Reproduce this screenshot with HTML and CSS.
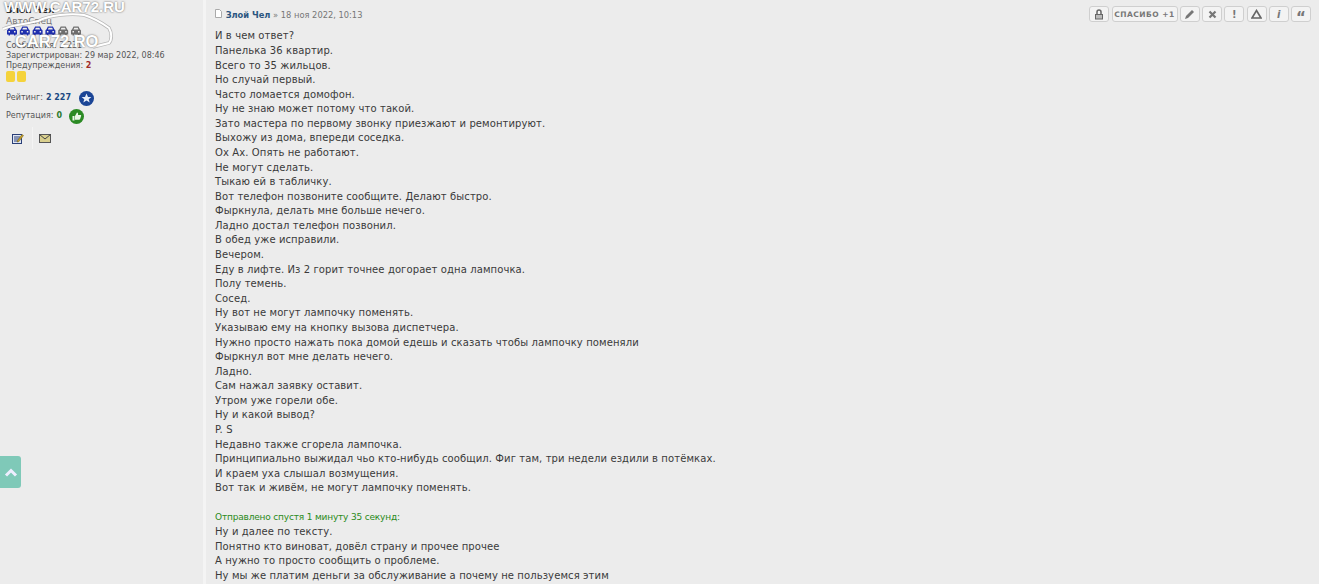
FILE: index.html
```html
<!DOCTYPE html>
<html lang="ru">
  <head>
    <meta charset="UTF-8" />
    <title>Злой Чел</title>
    <link rel="stylesheet" href="styles.css">
  </head>
  <body>
    <div class="post">
      <aside class="profile">
        <div class="watermark">
          <span class="wm-top">WWW.CAR72.RU</span>
          <svg class="wm-car" width="120" height="52" viewBox="0 0 120 52">
            <path d="M3 29 C14 24 28 24 38 21 C50 15 70 13 84 15 C94 18 102 23 109 28 C112 33 112 40 109 43 L93 47" fill="none" stroke="#8a8a8a" stroke-width="3.5" opacity="0.55"/>
            <path d="M3 29 C14 24 28 24 38 21 C50 15 70 13 84 15 C94 18 102 23 109 28 C112 33 112 40 109 43 L93 47" fill="none" stroke="#fff" stroke-width="2"/>
          </svg>
          <span class="wm-bottom">CAR72.RO</span>
        </div>
        <div class="username">Злой Чел</div>
        <div class="rank">АвтоСпец</div>
        <div class="cars">
          <svg width="78" height="10" viewBox="0 0 78 10">
            <defs>
              <path id="car" d="M2 3.500 3.500 .5h5L10 3.500c.7.2 1 .6 1 1.200V8.500H9.500V9.500H8V8.500H4V9.500H2.500V8.500H1V4.700c0-.6.3-1 1-1.200zM3.500 3.500h5L7.800 1.800H4.200zM2.500 5v1.500h1.500V5zM8 5v1.500h1.500V5z" fill-rule="evenodd"/>
            </defs>
            <g fill="#1f2fae">
              <use href="#car" x="0"/>
              <use href="#car" x="12.800"/>
              <use href="#car" x="25.600"/>
              <use href="#car" x="38.400"/>
            </g>
            <g fill="#6e6e6e">
              <use href="#car" x="51.200"/>
              <use href="#car" x="64"/>
            </g>
          </svg>
        </div>
        <div class="stat">Сообщения: 2 231</div>
        <div class="stat">Зарегистрирован: 29 мар 2022, 08:46</div>
        <div class="stat">Предупреждения: <b class="warn">2</b></div>
        <div class="cards"><i class="card"></i><i class="card"></i></div>
        <div class="score">
          Рейтинг: <b class="blue">2 227</b>
          <svg class="badge" width="15" height="15" viewBox="0 0 15 15">
            <circle cx="7.500" cy="7.500" r="7.500" fill="#1b4596"/>
            <path d="M7.500 2.500 9 6h3.400l-2.700 2.200 1 3.400-3.200-2-3.200 2 1-3.400L2.600 6H6z" fill="#e8eef8"/>
          </svg>
        </div>
        <div class="score rep">
          Репутация: <b class="green">0</b>
          <svg class="badge" width="15" height="15" viewBox="0 0 15 15">
            <circle cx="7.500" cy="7.500" r="7.500" fill="#2b8a24"/>
            <path d="M3.500 7h2v4.500h-2zM6 7l2-3.500c1 0 1.300.8 1 2.500h2.500c.6 0 .8.6.6 1.100l-1 3c-.2.5-.5.7-1 .7H6z" fill="#e9f6e6"/>
          </svg>
        </div>
        <div class="contact">
          <svg width="12" height="11" viewBox="0 0 12 11">
            <rect x=".5" y="1.500" width="9" height="9" fill="#dfe6f2" stroke="#2a3f78"/>
            <path d="M2 4h6M2 6h6M2 8h4" stroke="#2a3f78"/>
            <path d="M5.500 7.500l4.500-6 1.500 1-4.500 6-2 .5z" fill="#c9a227" stroke="#6b5a20" stroke-width=".5"/>
          </svg>
          <i class="sep"></i>
          <svg width="12" height="9" viewBox="0 0 12 9">
            <rect x=".5" y=".5" width="11" height="8" fill="#d9cf8e" stroke="#555"/>
            <path d="M.5.5 6 5l5.500-4.500" fill="none" stroke="#444"/>
          </svg>
        </div>
      </aside>
      <main class="body">
        <div class="buttons">
          <button class="btn"><svg width="10" height="11" viewBox="0 0 10 11"><path d="M3 5V3a2 2 0 0 1 4 0v2" fill="none" stroke="#666" stroke-width="1.500"/><rect x="1.500" y="5.500" width="7" height="4.500" fill="#bbb" stroke="#666"/></svg></button>
          <button class="btn btn-text">СПАСИБО +1</button>
          <button class="btn"><svg width="11" height="11" viewBox="0 0 11 11"><path d="M1 10l1-3 6-6 2 2-6 6z" fill="#777"/></svg></button>
          <button class="btn"><svg width="9" height="9" viewBox="0 0 9 9"><path d="M1.500 1.500l6 6M7.500 1.500l-6 6" stroke="#777" stroke-width="2.200"/></svg></button>
          <button class="btn btn-glyph">!</button>
          <button class="btn"><svg width="11" height="10" viewBox="0 0 11 10"><path d="M5.500 1.500 10 9H1z" fill="none" stroke="#666" stroke-width="1.600"/></svg></button>
          <button class="btn btn-glyph btn-info">i</button>
          <button class="btn btn-glyph btn-quote">“</button>
        </div>
        <div class="post-head">
          <svg width="7" height="9" viewBox="0 0 7 9"><path d="M.5.5h4l2 2v6h-6z" fill="#fff" stroke="#aaa"/></svg>
          <a class="author">Злой Чел</a> » 18 ноя 2022, 10:13
        </div>
        <div class="content">
          <p>И в чем ответ?</p>
          <p>Панелька 36 квартир.</p>
          <p>Всего то 35 жильцов.</p>
          <p>Но случай первый.</p>
          <p>Часто ломается домофон.</p>
          <p>Ну не знаю может потому что такой.</p>
          <p>Зато мастера по первому звонку приезжают и ремонтируют.</p>
          <p>Выхожу из дома, впереди соседка.</p>
          <p>Ох Ах. Опять не работают.</p>
          <p>Не могут сделать.</p>
          <p>Тыкаю ей в табличку.</p>
          <p>Вот телефон позвоните сообщите. Делают быстро.</p>
          <p>Фыркнула, делать мне больше нечего.</p>
          <p>Ладно достал телефон позвонил.</p>
          <p>В обед уже исправили.</p>
          <p>Вечером.</p>
          <p>Еду в лифте. Из 2 горит точнее догорает одна лампочка.</p>
          <p>Полу темень.</p>
          <p>Сосед.</p>
          <p>Ну вот не могут лампочку поменять.</p>
          <p>Указываю ему на кнопку вызова диспетчера.</p>
          <p>Нужно просто нажать пока домой едешь и сказать чтобы лампочку поменяли</p>
          <p>Фыркнул вот мне делать нечего.</p>
          <p>Ладно.</p>
          <p>Сам нажал заявку оставит.</p>
          <p>Утром уже горели обе.</p>
          <p>Ну и какой вывод?</p>
          <p>P. S</p>
          <p>Недавно также сгорела лампочка.</p>
          <p>Принципиально выжидал чьо кто-нибудь сообщил. Фиг там, три недели ездили в потёмках.</p>
          <p>И краем уха слышал возмущения.</p>
          <p>Вот так и живём, не могут лампочку поменять.</p>
          <p>&nbsp;</p>
          <p class="merged">Отправлено спустя 1 минуту 35 секунд:</p>
          <p>Ну и далее по тексту.</p>
          <p>Понятно кто виноват, довёл страну и прочее прочее</p>
          <p>А нужно то просто сообщить о проблеме.</p>
          <p>Ну мы же платим деньги за обслуживание а почему не пользуемся этим</p>
        </div>
      </main>
    </div>
    <a class="to-top"><svg width="14" height="9" viewBox="0 0 14 9"><path d="M2 7.500 7 2.500l5 5" fill="none" stroke="#eef" stroke-width="3"/></svg></a>
  </body>
</html>
```

FILE: styles.css
```css
html,
body {
  height: 100%;
}
body {
  margin: 0;
  overflow: hidden;
  background: #ececec;
  color: #333;
  font-family: "DejaVu Sans", Verdana, sans-serif;
  font-size: 10px;
}
.post {
  display: flex;
  height: 584px;
}
.profile {
  position: relative;
  width: 197px;
  padding: 5px 0 0 6px;
  border-right: 3px solid #f4f4f4;
  font-size: 8px;
  color: #555;
  line-height: 10px;
}
.watermark {
  position: absolute;
  left: 0;
  top: 0;
  width: 200px;
  height: 60px;
  z-index: 1;
}
.wm-top,
.wm-bottom {
  position: absolute;
  font-family: "Liberation Sans", sans-serif;
  font-weight: bold;
  color: #fff;
  text-shadow: 0 0 2px #555;
  white-space: nowrap;
  line-height: 13px;
}
.wm-top {
  left: 4px;
  top: 0;
  font-size: 15px;
}
.wm-bottom {
  left: 15px;
  top: 35px;
  font-size: 16.500px;
}
.wm-car {
  position: absolute;
  left: 0;
  top: 0;
}
.username {
  font-size: 9px;
  line-height: 11px;
  font-weight: bold;
  color: #222;
}
.rank {
  font-size: 9px;
  line-height: 11px;
  color: #777;
}
.cars {
  height: 10px;
  margin-top: -1px;
  margin-bottom: 5px;
}
.cars svg {
  display: block;
}
.stat {
  height: 10px;
}
.warn {
  color: #a02b2b;
}
.cards {
  display: flex;
  gap: 2px;
}
.card {
  width: 9px;
  height: 11px;
  border-radius: 2px;
  background: #f5d33b;
}
.score {
  display: flex;
  align-items: center;
  gap: 3px;
  height: 15px;
  margin-top: 8.500px;
}
.score b {
  margin-right: 5px;
}
.rep {
  margin-top: 3px;
}
.rep b {
  margin-right: 4px;
}
.blue {
  color: #1c4a82;
}
.green {
  color: #2d7a2d;
}
.contact {
  display: flex;
  align-items: center;
  height: 13px;
  margin: 8px 0 0 6px;
}
.sep {
  width: 1px;
  height: 22px;
  margin: 0 6px 0 8px;
  background: #f4f4f4;
}
.body {
  position: relative;
  flex: 1;
  padding: 9px 8px 0 9px;
}
.buttons {
  position: absolute;
  top: 6px;
  right: 8px;
  display: flex;
  gap: 2.250px;
}
.btn {
  display: flex;
  align-items: center;
  justify-content: center;
  width: 20px;
  height: 16px;
  padding: 0;
  border: 1px solid #cfcfcf;
  border-radius: 3px;
  background: #f3f3f3;
  color: #777;
  font-family: "DejaVu Sans", sans-serif;
  font-size: 10px;
  font-weight: bold;
}
.btn-text {
  width: 66px;
  font-size: 7.500px;
  letter-spacing: 0.5px;
  white-space: nowrap;
}
.btn-info {
  font-style: italic;
}
.btn-quote {
  font-size: 15px;
  padding-top: 7px;
}
.post-head {
  height: 11px;
  font-size: 8.300px;
  line-height: 11px;
  color: #777;
}
.author {
  font-weight: bold;
  color: #2a5580;
  margin-left: 1px;
}
.content {
  margin-top: 9.400px;
  line-height: 14.580px;
  letter-spacing: 0.1px;
  color: #3a3a3a;
}
.content p {
  margin: 0;
}
.content .merged {
  color: #2a8a20;
  font-size: 9px;
  letter-spacing: -0.180px;
}
.to-top {
  position: fixed;
  left: 0;
  top: 456px;
  display: flex;
  align-items: center;
  justify-content: center;
  width: 21px;
  height: 32px;
  border-radius: 0 3px 3px 0;
  background: #7fc9b8;
}
```
